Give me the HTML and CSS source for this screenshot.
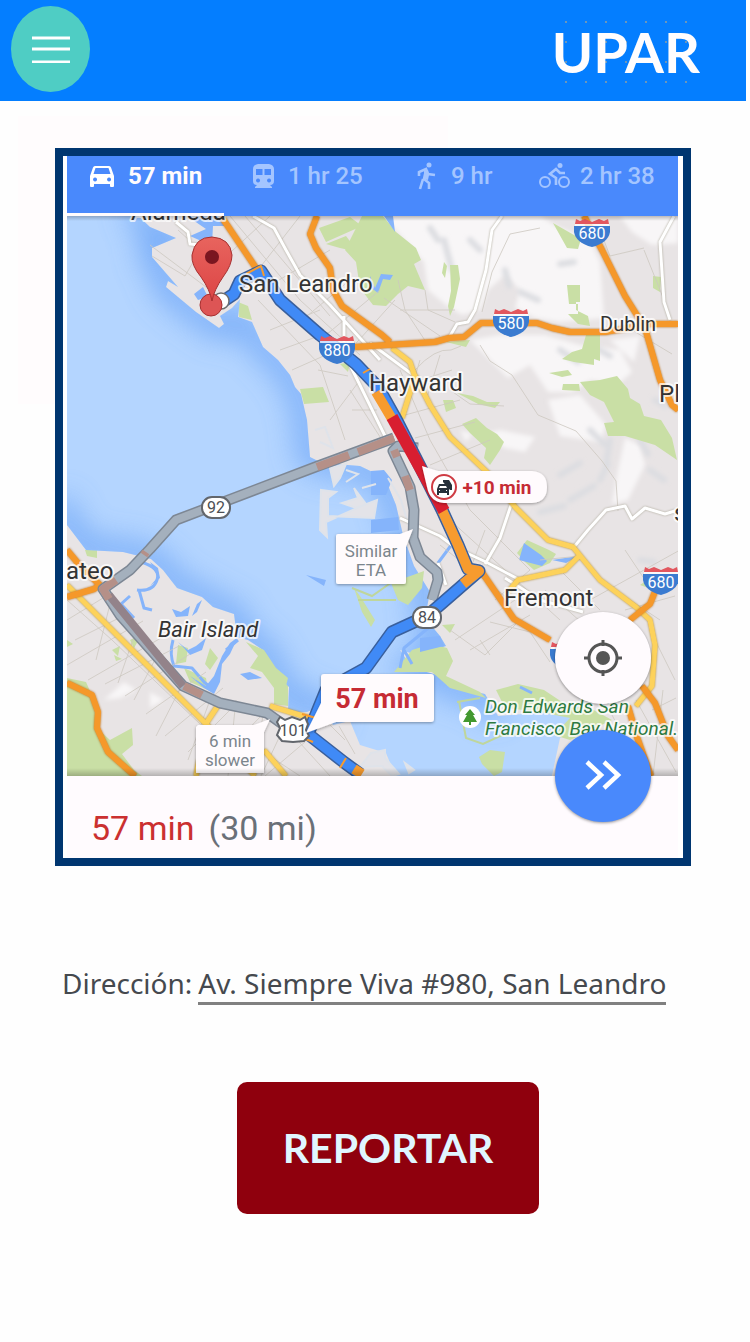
FILE: index.html
```html
<!DOCTYPE html>
<html lang="es">
<head>
<meta charset="utf-8">
<meta name="viewport" content="width=device-width, initial-scale=1">
<title>UPAR</title>
<link rel="stylesheet" href="styles.css">
</head>
<body>
<header class="topbar">
  <button class="menu" type="button" aria-label="Menú">
    <svg width="38" height="28" viewBox="0 0 38 28" aria-hidden="true"><path d="M0 3h38M0 14h38M0 27h38" stroke="#fff" stroke-width="3"/></svg>
  </button>
  <h1 class="brand">UPAR</h1>
</header>
<main class="content">
  <section class="route" aria-label="Ruta">
    <nav class="modes">
      <button class="mode mode-active" type="button">
        <svg width="24" height="22" viewBox="0 0 24 22" aria-hidden="true"><path fill="#fff" fill-rule="evenodd" d="M5 1h14q1.5 0 2 1.5L24 11v10q0 1-1 1h-2q-1 0-1-1v-2H4v2q0 1-1 1H1q-1 0-1-1V11L3 2.500Q3.500 1 5 1zM5.500 3 3.500 9h17L18.500 3zM5 12.500a2 2 0 1 0 .1 0zM19 12.500a2 2 0 1 0 .1 0z"/></svg>
        <span>57 min</span>
      </button>
      <button class="mode" type="button">
        <svg width="21" height="24" viewBox="0 0 21 24" aria-hidden="true"><path fill="currentColor" fill-rule="evenodd" d="M5 0h11q5 1 5 5v12q0 4-4 4l2 2v1H2v-1l2-2q-4 0-4-4V5q0-4 5-5zM3 5v6h6.500V5zM11.500 5v6H18V5zM5 14.500a2 2 0 1 0 .1 0zM16 14.500a2 2 0 1 0 .1 0z"/></svg>
        <span>1 hr 25</span>
      </button>
      <button class="mode" type="button">
        <svg width="20" height="28" viewBox="0 0 20 28" aria-hidden="true"><circle cx="12" cy="3" r="2.500" fill="currentColor"/><path d="M2 14V10l7-3 2 5 7 1M9 8 7 17l5 4v6M6 17 3 27" fill="none" stroke="currentColor" stroke-width="2.600"/><path d="M7 8h4l1 5-1 5-4-1z" fill="currentColor"/></svg>
        <span>9 hr</span>
      </button>
      <button class="mode" type="button">
        <svg width="31" height="26" viewBox="0 0 31 26" aria-hidden="true"><g fill="none" stroke="currentColor"><circle cx="6" cy="19" r="5" stroke-width="2"/><circle cx="25" cy="19" r="5" stroke-width="2"/><path d="M26 10h-5l-4-4-6 5 6 4v7" stroke-width="2.600"/></g><circle cx="21" cy="2.500" r="2.500" fill="currentColor"/></svg>
        <span>2 hr 38</span>
      </button>
    </nav>
    <svg class="map" viewBox="67 216 611 560" role="img" aria-label="Mapa de la ruta">
      <defs>
        <path id="bay" d="M60 210H132L150 227 176 238 152 248 152 257 178 287 168 281 166 287 196 312 219 328 224 324 220 316 232 308 240 299 238 317 252 322 263 347 278 360 290 375 295 387 301 394 307 420 310 457 322 463 360 466 385 478 396 505 403 535 414 566 430 592 425 618 440 636 446 646 418 655 400 650 412 668 441 676 448 686 485 694 498 716 548 712 575 704 596 716 560 738 551 780H397L386 753 360 745 350 721 333 725 322 706 307 712 288 712 289 687 276 674 263 650 248 640 237 637 234 614 213 607 202 597 177 588 163 570 151 559 123 552 86 550 67 525 60 500z"/>
        <path id="bay-shore" d="M132 205 150 227 176 238 152 248 152 257 178 287 168 281 166 287 196 312 219 328 240 317 263 347 278 360 290 375 301 394 307 420 310 457 322 463 360 466 385 478 396 505 403 535 414 566 430 592 425 618 440 636 446 646 412 668 441 676 448 686 485 694 498 716M333 725 322 706 289 700 276 674 263 650 248 640 237 637 234 614 213 607 202 597 177 588 163 570 151 559 123 552 86 550 67 525 60 500"/>
        <clipPath id="bay-clip"><use href="#bay"/></clipPath>
        <filter id="shore" x="-15%" y="-15%" width="130%" height="130%"><feGaussianBlur stdDeviation="15"/></filter>
        <filter id="terrain" x="-5%" y="-5%" width="110%" height="110%"><feGaussianBlur stdDeviation="2"/></filter>
        <linearGradient id="bar-shade" x1="0" y1="0" x2="0" y2="1"><stop offset="0" stop-color="#000" stop-opacity=".22"/><stop offset="1" stop-color="#000" stop-opacity="0"/></linearGradient>
        <linearGradient id="foot-shade" x1="0" y1="0" x2="0" y2="1"><stop offset="0" stop-color="#000" stop-opacity="0"/><stop offset="1" stop-color="#000" stop-opacity=".22"/></linearGradient>
        <linearGradient id="pin-fill" x1="0" y1="0" x2="0" y2="1"><stop offset="0" stop-color="#e8645e"/><stop offset="1" stop-color="#dc4545"/></linearGradient>
        <filter id="drop" x="-20%" y="-20%" width="140%" height="150%"><feDropShadow dx="0" dy="1" stdDeviation="1.500" flood-opacity=".35"/></filter>
        <g id="shield"><path d="M-18-6H18V0Q16 11 0 15-16 11-18 0z" fill="#3b7bd0"/><path d="M-16-13-12-11-7-13 0-10 7-13 12-11 16-13 17-8H-17z" fill="#e2575f"/><path d="M-17-7H17" stroke="#fff" stroke-width="1.500"/></g>
      </defs>
      <rect x="67" y="216" width="611" height="560" fill="#e8e4e5"/>

      <g class="hills" filter="url(#terrain)">
        <path d="M382 216H540L556 226 590 240 600 262 604 318 560 322 535 318 515 308 520 290 505 275 488 290 480 310 462 315 446 305 428 290 424 262 400 235z"/>
        <path d="M470 340 500 335 545 335 580 345 620 350 632 372 618 384 590 380 572 392 548 392 530 365 508 378 490 360zM548 400 580 395 606 425 600 442 560 436z"/>
        <path d="M620 216H678V243L652 245 632 232zM480 435 500 430 535 437 525 452 505 448zM610 340 640 336 634 362zM625 438 640 445 645 465 628 500 612 504 618 470zM460 430l12 4-6 8z"/>
        <path d="M104 700 124 682 136 690 120 698zM67 750 92 745 96 776H67zM150 692 164 700 150 708z"/>
      </g>
      <g class="relief" filter="url(#terrain)">
        <path d="M444 240l8 30M430 228l8 12M470 240l10 10M505 270l4 16M560 264l14-2M520 292l18 8M560 350l18 12M590 430l14 14M610 440l-4 24M560 475l20-12M570 500l24-14M600 480l8-16M640 440l8 14M650 470l14 10M540 512l24-6M596 348l14 8M655 400l10 6M640 560l14 2"/>
      </g>

      <g class="green">
        <path d="M362 216H383L396 232 416 248 421 260 414 264 425 290 408 286 398 294 386 306 373 305 360 288 356 262 345 250z"/>
        <path d="M319 228 350 217 362 226 326 242zM326 244 346 236 358 252 340 248z"/>
        <path d="M553 223 581 239 578 249 567 248zM450 265h8l2 14-6 28-4 9-2-10 3-15zM444 262l3 4-2 12-3-5zM567 285h13v17h-4v8l12 6 2 10-12-2-10-10h10v-10h-9zM586 335h14v26l-6-2v6l-20-3-12-3 10-7 10-3z"/>
        <path d="M653 276 661 277 660 292 653 288zM580 382 600 380 617 376 628 389 630 398 640 404 644 416 661 420 672 438 677 460 655 445 625 436 608 436 604 423 614 422 604 402 590 395z"/>
        <path d="M549 373 568 370 572 375 562 377zM563 384h16l1 7-18-1zM462 424 476 418 487 428 497 434 504 442 500 450 490 465 484 458 486 448 470 433zM457 393 473 396 487 402 500 402 495 408 478 404zM443 400h10l3 8-10 4zM446 342 470 340 466 347z"/>
        <path d="M300 389 323 387 329 402 304 404zM238 302 248 306 252 320 239 317zM340 364 350 362 348 372z"/>
        <path d="M517 553 527 540 549 550 556 554 550 563 534 570 525 562z"/>
        <path d="M85 550h12v8l-10-2zM67 506l5 14-5 6zM67 678 86 682 94 700 96 727 110 740 132 728 133 745 122 754 134 770 142 776H67z"/>
        <path d="M308 680 328 668 346 680 320 704 309 704zM274 686 288 684 288 706 274 704z"/>
        <path d="M112 650l8-4-2 10zM130 640l12-6-8 14zM67 640l6 4-6 3zM114 655l8 4-6 2zM640 585 650 578 654 590z"/>
      </g>

      <use href="#bay" fill="#b4d5ff"/>
      <g clip-path="url(#bay-clip)"><use href="#bay-shore" fill="none" stroke="#5f9bf5" stroke-width="22" opacity=".75" filter="url(#shore)"/></g>
      <g class="green">
        <path d="M178 645 188 648 186 662 176 664zM184 668 206 678 208 690 190 682zM210 648 218 658 210 670 205 664zM246 642 264 650 276 668 288 678 284 694 274 688 262 672 250 668 258 656z"/>
        <path d="M412 650 431 644 447 648 453 661 446 676 480 692 486 698 450 688 432 672 394 672zM496 690 518 684 544 690 568 706 590 708 612 720 570 740 554 735 570 718 540 712 505 708z"/>
        <path d="M479 757 490 750 505 752 502 772 494 776 482 764zM391 583 424 571 422 588 408 605 398 600zM442 625 455 624 450 633zM354 588 360 596 375 620 371 627 362 612z"/>
      </g>
      <path class="water" d="M187 216H220L226 226 213 226 212 244 199 240 190 236 206 229zM384 216H393L395 232zM370 276l5 12 6-14 12 1-3 5-7-1-5 14-8-6zM519 560 524 543 541 555 547 561 542 566zM552 560 578 556 566 563zM371 471 384 470 392 480 386 495H371zM371 520 398 517 399 530 371 533zM194 294 203 287 208 297 198 300z"/>

      <g class="salt">
        <path d="M330 468 346 464 340 478 334 486zM321 490 336 492 328 498 328 516 374 518 377 500 356 508 342 503 358 498 354 488 366 504 326 522 327 537 320 530z"/>
        <path d="M315 430 325 427 333 448 320 442M346 470 358 474 346 482M388 478 401 500 410 530M362 488l14-4" fill="none"/>
        <path d="M457 702 480 698M459 701 466 738 483 744 500 736 540 732M358 600H396M352 588l20 8 20-14" fill="none" stroke="#bfd69c"/>
        <path d="M371 753 385 750 385 758 399 774 392 776 382 766 360 767zM409 773 405 763 414 770z"/>
      </g>
      <path class="water" d="M172 609 181 612 190 606 188 616 176 617zM178 642 188 650 196 646 206 638 202 650 190 655 184 648zM202 600 197 612 192 616 197 604zM190 676 206 686 214 676 222 656 230 643 238 637 230 654 222 664 220 682 214 694 204 688zM240 674 250 672 262 678 248 680zM420 638 440 636 444 646 420 652zM306 575 326 580 324 586zM150 562 158 568 160 578 150 586 158 577z"/>
      <g class="creek">
        <path d="M130 596 121 604 134 618M141 562q20 6 16 18t-20 10M139 590l5 18 8 2M173 640q-4 14 1 26l18 2 12 14 10 8M238 640l-12 10"/>
        <path d="M438 620 404 648 400 668M404 650l8 14M455 540 438 563M520 687l12 6"/>
      </g>

      <g class="minor">
        <path d="M178 230 200 250 185 276 152 256M150 245 210 290M230 216 300 300 360 355M245 216 330 316M270 216 220 262M300 216 258 270M330 250 262 290M350 280 300 322M380 290 320 340M395 300 350 350M258 300 320 365 345 440M270 330 320 310M280 350 330 332M292 370 355 342M330 420 360 380M350 390 382 440M352 410h25M318 370l30 6"/>
        <path d="M398 280 405 310 428 345M400 310h55M384 298 440 336M425 290 428 310 455 322M540 228l-30 6-18 38-10 40M600 230l10 26 34-8M644 250l20 50M632 330l40 24M415 370q20-22 36-20l10-4M450 390l20 14 34 2M480 345l10 16 22 14 26 40 38 16 26 30 14 20 2 30"/>
        <path d="M400 370 430 440 470 510 530 570M390 390 452 370M405 415 460 400M415 438 475 422M430 465 490 440M420 360l-12 40M440 355l-14 46M450 520l110 100M440 545l66 52M485 530l-15 40M530 570l-35 30M545 590l45 40M490 622l40 10 20 30M450 630 485 655 520 620M455 640l60-40M470 650l60-35M480 640l10 15M540 560l40-4M560 570l40 40M600 580l60 40M625 610l50-14M625 550l20 30 33 5M655 640l20 40M590 600l90-50"/>
        <path d="M67 600 112 640 200 724M67 620l36-22M75 640l46-23M67 665l76-44M88 680l80-46M105 684l74-38M125 696l65-42M146 714l60-42M165 736l58-48M188 752l45-45M210 768l53-54M111 600l-15 60M138 625l-20 58M160 650l-26 50M184 681l-28 55M210 700l-22 60M236 700l-8 76M263 714l-8 62M285 725l-24 51M230 730l70 46M270 710l60 66M305 742l-40 34M325 720l20 20M355 754l-16-28M612 715l32 61M636 700l40 72M652 710l24-12M663 690l-10 86"/>
      </g>
      <g class="street">
        <path d="M253 216 274 228 286 250 300 275 330 305 380 360M176 222 188 232 190 244 210 246M502 216 492 230 486 270 475 310 468 322 457 324 450 336M344 316v26M350 365 385 436M400 518 440 536 456 548 486 562 518 579M511 505 500 538 485 564M574 547 588 530 606 510 625 506 632 519 645 508 665 514 678 510M674 216 660 242 664 302 670 320M505 578 540 600 583 612M438 563l8 22M370 343 420 380"/>
      </g>
      <g class="road-yellow">
        <path d="M392 348 410 362 414 374 430 405 450 437 490 475 516 508 548 540 573 547 600 580 636 607 650 620 655 645 652 686 636 706M402 418 414 380M67 585 207 725 255 776M207 722 219 704M196 776 199 760M264 750 286 776M270 706 310 718M580 555 565 570 518 580 508 592"/>
      </g>
      <g class="road">
        <path d="M221 216 258 271M317 216 310 234 316 248 330 268 333 290 342 306 382 335 390 342M355 347 435 342 449 338 464 337 481 323H537L552 328 570 332 605 332 650 324H678M584 216 602 250 625 296 645 328 660 380 672 405 678 410M67 550 82 568 100 585 94 589 67 597M67 683 92 695 98 712 97 728 108 752 135 776M479 568 514 619 550 640M658 584 650 604 630 620M642 686 655 703 668 736 678 750M628 706 637 737 651 776"/>
      </g>

      <g class="alt">
        <path class="alt-edge" d="M394 438 318 466 176 520 150 549 130 570 103 589 120 615 183 686 220 703 267 713 288 728"/>
        <path class="alt-fill" d="M394 438 318 466 176 520 150 549 130 570 103 589 120 615 183 686 220 703 267 713 288 728"/>
        <path class="alt-red" d="M109 595 183 686"/>
        <path class="alt-hot" d="M394 438 358 452M349 455 317 467M146 552l-2 3M184 686 202 695M116 580 103 589 109 599"/>
        <path class="alt-edge" d="M418 448 398 446 393 451 410 487 414 510 413 538 420 557 437 572 438 580 432 600"/>
        <path class="alt-fill" d="M418 448 398 446 393 451 410 487 414 510 413 538 420 557 437 572 438 580 432 600"/>
        <path class="alt-hot" d="M394 450 397 457M405 476 410 490"/>
      </g>

      <g class="trip">
        <path class="trip-edge" d="M222 302 234 294 240 281 261 271 280 300 320 335 356 364 378 387 397 421 442 510 458 545 468 569 479 571 441 604 427 616 392 632 366 668 326 690 308 734 345 763 360 774"/>
        <path class="trip-blue" d="M222 302 234 294 240 281 261 271 280 300 320 335 356 364 378 387 397 421 442 510 458 545 468 569 479 571 441 604 427 616 392 632 366 668 326 690 308 734 345 763 360 774"/>
        <path class="trip-orange" d="M376 392 392 419M442 510 458 545 468 569 479 571 463 584M354 769 362 774"/>
        <path class="trip-red" d="M392 417 444 511"/>
        <path d="M246 274 261 266 264 276M302 714 316 718M303 738 313 742M340 768 346 758M363 373 370 369" stroke="#f79b2e" stroke-width="2" fill="none"/>
      </g>

      <g class="badge">
        <use href="#shield" x="592" y="232"/><text x="592" y="239">680</text>
        <use href="#shield" x="511" y="322"/><text x="511" y="329">580</text>
        <use href="#shield" x="337" y="349"/><text x="337" y="356">880</text>
        <use href="#shield" x="661" y="580"/><text x="661" y="588">680</text>
        <use href="#shield" x="568" y="655"/>
      </g>
      <g class="oval">
        <rect x="202" y="497" width="28" height="21" rx="10"/><text x="216" y="513">92</text>
        <rect x="413" y="607" width="28" height="21" rx="10"/><text x="427" y="623">84</text>
        <path d="M280 717 285 720 292 717 300 720 305 717 308 724 306 730 309 736 304 741 293 742 282 741 277 735 280 728 277 722z"/><text x="293" y="736">101</text>
      </g>

      <circle cx="221" cy="301" r="8" fill="#fff" stroke="#6d6d6d" stroke-width="1.500"/>
      <circle cx="211" cy="305" r="11" fill="#dd5555" stroke="#a73030"/>
      <path d="M212 301Q210 290 201 277 191 265 192 255 195 237 212 237 230 238 232 255 232 265 223 277 214 290 212 301z" fill="url(#pin-fill)" stroke="#a73030"/>
      <circle cx="212" cy="257" r="7" fill="#7b1620"/>

      <g class="label">
        <text x="131" y="220">Alameda</text>
        <text x="239" y="292">San Leandro</text>
        <text x="369" y="391">Hayward</text>
        <text x="504" y="606">Fremont</text>
        <text x="66" y="579">ateo</text>
        <text x="659" y="402">Pl</text>
        <text x="674" y="521">s</text>
        <text class="label-town" x="600" y="331">Dublin</text>
        <text class="label-island" x="158" y="637">Bair Island</text>
        <text class="label-park" x="485" y="713">Don Edwards San</text>
        <text class="label-park" x="485" y="735">Francisco Bay National.</text>
      </g>
      <circle cx="470" cy="717" r="11" fill="#fff"/><path d="M470 709 475 715H473L477 722H471V725H469V722H463L467 715H465z" fill="#43992f"/>

      <g filter="url(#drop)" fill="#fffbfd">
        <path d="M338 534H400L413 529 406 547V582Q406 584 404 584H338Q336 584 336 582V536Q336 534 338 534z"/>
        <path d="M198 725H254L270 719 264 732V773H196V727z"/>
        <path d="M324 674H431Q434 674 434 677V719Q434 722 431 722H336L306 733 321 703V677Q321 674 324 674z"/>
        <path d="M422 466 438 471H532Q547 472 547 487 547 502 532 503H444Q430 502 427 487z"/>
      </g>
      <g class="callout">
        <text x="371" y="557">Similar</text><text x="371" y="576">ETA</text>
        <text x="230" y="747">6 min</text><text x="230" y="766">slower</text>
        <text class="callout-time" x="377" y="708">57 min</text>
        <text class="callout-delay" x="497" y="494">+10 min</text>
      </g>
      <circle cx="444" cy="487" r="12" fill="#fff" stroke="#cf3b43" stroke-width="2"/>
      <path d="M439 484H446L449 489V495H447V493H439V495H437V489zM443 482V480H449L452 485V490H450" fill="#26303a"/><path d="M440 486h6l1 2h-8zM439 490h1v1h-1zM446 490h1v1h-1z" fill="#fff"/>
      <rect x="67" y="216" width="611" height="5" fill="url(#bar-shade)"/>
      <rect x="67" y="768" width="611" height="8" fill="url(#foot-shade)"/>
    </svg>
    <p class="summary"><strong class="summary-time">57 min</strong> <span>(30 mi)</span></p>
    <div class="actions">
      <button class="round locate" type="button" aria-label="Mi ubicación">
        <svg width="38" height="38" viewBox="0 0 38 38" aria-hidden="true"><circle cx="19" cy="19" r="14" fill="none" stroke="#555" stroke-width="3"/><circle cx="19" cy="19" r="7" fill="#555"/><path d="M19 1v6M19 31v6M0 19h6M32 19h6" stroke="#555" stroke-width="3"/></svg>
      </button>
      <button class="round next" type="button" aria-label="Continuar">
        <svg width="38" height="32" viewBox="0 0 38 32" aria-hidden="true"><path d="M3 2 17 15 3 28M20 2 34 15 20 28" fill="none" stroke="#fff" stroke-width="4.500"/></svg>
      </button>
    </div>
  </section>
  <p class="address"><span>Dirección:</span> <a class="address-link" href="#">Av. Siempre Viva #980, San Leandro</a></p>
  <button class="report" type="button">REPORTAR</button>
</main>
</body>
</html>
```
FILE: styles.css
```css
* { box-sizing: border-box; }
body {
  margin: 0;
  padding-right: 4px;
  background: #fefefe;
  font-family: Roboto, "Liberation Sans", sans-serif;
}
button { border: 0; padding: 0; font: inherit; cursor: pointer; }
.topbar {
  display: flex;
  align-items: center;
  justify-content: space-between;
  padding: 6px 42px 9px 11px;
  background: #047eff;
}
.menu {
  display: grid;
  place-items: center;
  width: 79px;
  height: 86px;
  border-radius: 50%;
  background: #4fcdc4;
}
.brand {
  margin: 6px 0 0;
  padding: 0 4px;
  color: #fffdfe;
  font: 700 56px/64px Lato, sans-serif;
  background: radial-gradient(circle at 18px 2px, #6d96b8 1px, transparent 1px) 0 0 / 20px 20px;
}
.content {
  display: flex;
  flex-direction: column;
  padding: 47px 55px 120px;
  background: linear-gradient(#fffcfd, #fffcfd) 18px 15px / 430px 288px no-repeat;
}
.route {
  position: relative;
  border: 8px solid #003670;
  padding: 0 5px 0 4px;
  background: #fff;
}
.modes {
  display: grid;
  grid-template-columns: 157fr 164fr 122fr 168fr;
  height: 60px;
  background: #4989fc;
}
.mode {
  display: flex;
  align-items: center;
  gap: 14px;
  padding: 0 0 20px 29px;
  background: none;
  color: #a4c5ff;
  font-size: 24px;
  font-weight: 500;
  line-height: 28px;
  white-space: nowrap;
}
.mode:last-child { gap: 10px; }
.mode-active {
  padding: 0 0 17px 23px;
  border-bottom: 3px solid #fffbfd;
  color: #fffbfd;
  font-weight: 700;
}
.mode svg { flex: none; }
.map { display: block; width: 100%; }
.summary {
  display: flex;
  align-items: center;
  gap: 14px;
  margin: 0;
  padding: 32px 24px 10px;
  background: #fffbfe;
  color: #6a7078;
  font-size: 34px;
  line-height: 40px;
}
.summary-time { color: #cb3030; font-weight: 400; }
.actions {
  position: absolute;
  right: 32px;
  bottom: 36px;
  display: grid;
  gap: 26px;
}
.round {
  display: grid;
  place-items: center;
  width: 96px;
  height: 92px;
  border-radius: 50%;
  box-shadow: 0 1px 3px rgb(0 0 0 / 40%);
}
.locate { background: #fffbfe; }
.next { background: #4989fc; }

.hills { fill: #f8f6f7; }
.relief { fill: none; stroke: #dcdde1; stroke-width: 6; stroke-linecap: round; }
.green { fill: #c9dfa5; }
.water { fill: #85b4fb; }
.salt { fill: #e3e3e8; stroke: #dfe3ea; stroke-width: 2; }
.creek { fill: none; stroke: #85b4fb; stroke-width: 3; stroke-linejoin: round; }
.minor { fill: none; stroke: #cdc8c0; stroke-width: 1; opacity: .8; }
.street { fill: none; stroke: #fff; stroke-width: 3; stroke-linejoin: round; filter: drop-shadow(0 0 1px #aaa696); }
.road-yellow { fill: none; stroke: #fdd25b; stroke-width: 5; stroke-linejoin: round; filter: drop-shadow(0 0 1px #b48a28); }
.road { fill: none; stroke: #f5982a; stroke-width: 6; stroke-linejoin: round; filter: drop-shadow(0 0 1px #b66d18); }
.alt { fill: none; stroke-linejoin: round; }
.alt-edge { stroke: #7d8794; stroke-width: 11; }
.alt-fill { stroke: #a4b0bd; stroke-width: 8; }
.alt-red { stroke: #93838a; stroke-width: 8; }
.alt-hot { stroke: #b59088; stroke-width: 8; }
.trip { fill: none; stroke-linejoin: round; }
.trip-edge { stroke: #395f9c; stroke-width: 13; }
.trip-blue { stroke: #408af6; stroke-width: 10; }
.trip-orange { stroke: #f79b2e; stroke-width: 10; }
.trip-red { stroke: #d81e30; stroke-width: 12; }
.badge text { fill: #fff; font-size: 16px; text-anchor: middle; }
.oval { fill: #fff; stroke: #62666c; stroke-width: 2; }
.oval text { fill: #4c4f54; stroke: none; font-size: 16px; text-anchor: middle; }
.label text {
  fill: #333;
  font-size: 24px;
  paint-order: stroke;
  stroke: #fff;
  stroke-opacity: .75;
  stroke-width: 4px;
  stroke-linejoin: round;
}
.label .label-town { font-size: 20px; }
.label .label-island { font-size: 22px; font-style: italic; }
.label .label-park { font-size: 19px; font-style: italic; fill: #2d7a41; }
.callout text { fill: #7b858c; font-size: 17px; text-anchor: middle; }
.callout .callout-time { fill: #c62b34; font-size: 27px; font-weight: 700; }
.callout .callout-delay { fill: #c62b34; font-size: 19px; font-weight: 700; }

.address {
  display: flex;
  flex-wrap: wrap;
  gap: 6px;
  margin: 98px 0 0;
  padding-left: 7px;
  color: #45494e;
  font: 28px/38px "Noto Sans", sans-serif;
}
.address-link {
  border-bottom: 3px solid #808080;
  color: inherit;
  text-decoration: none;
}
.report {
  align-self: center;
  width: 302px;
  margin: 77px 0 0 30px;
  padding: 38px 0;
  border-radius: 10px;
  background: #8f000d;
  color: #e0f6ff;
  font: 700 41px/56px Lato, sans-serif;
}
```
